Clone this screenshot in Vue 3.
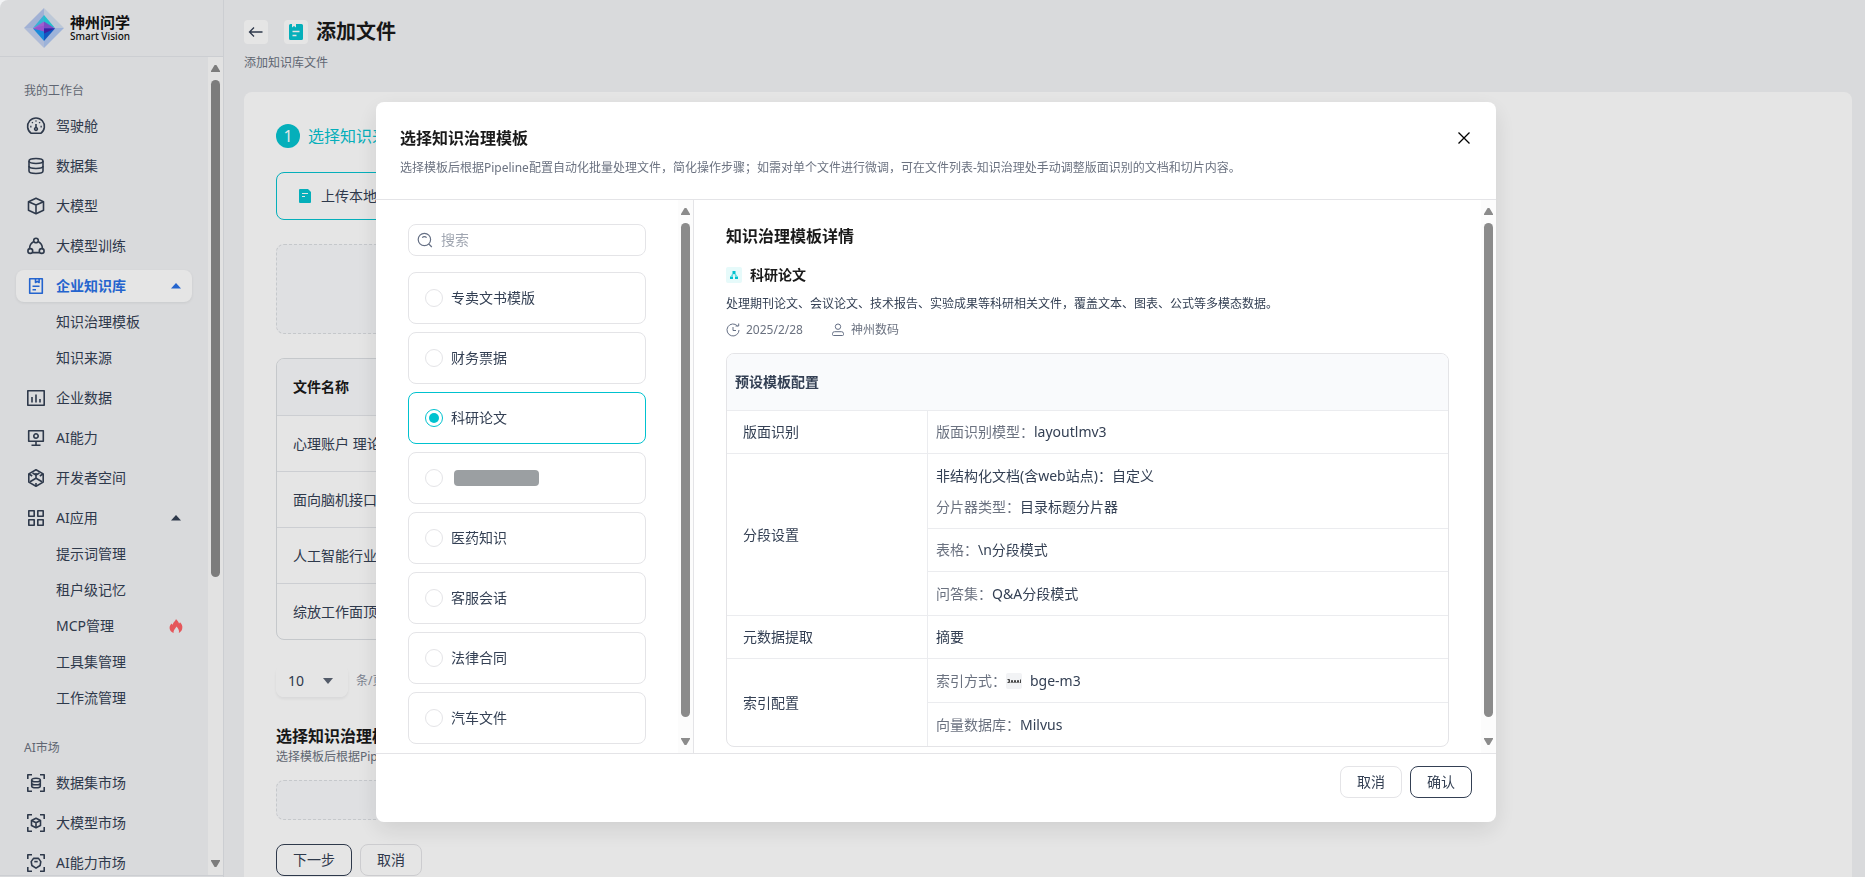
<script setup>
import { ref } from 'vue'

const circle = (cx, cy, r) => `M${cx - r} ${cy}a${r} ${r} 0 1 0 ${2 * r} 0a${r} ${r} 0 1 0 ${-2 * r} 0z`
const brackets = 'M1.800 6V1.800H6M14 1.800h4.200V6M18.200 14v4.200H14M6 18.200H1.800V14'

const icons = {
  gauge: ['M5.200 17.300a8.400 8.400 0 1 1 9.600 0z', 'M10 8v3.500', circle(10, 13, 1.4), 'M10 4.600v1M6 6.200l.8.8M14 6.200l-.8.8M4.200 10.600h1.300M14.500 10.600h1.300'],
  database: ['M3 5c0-1.600 3-2.500 7-2.500s7 .9 7 2.500-3 2.500-7 2.500S3 6.600 3 5z', 'M3 5v10c0 1.600 3 2.500 7 2.500s7-.9 7-2.500V5', 'M3 10c0 1.600 3 2.500 7 2.500s7-.9 7-2.500'],
  cube: ['M10 2.300l7.500 3.400v8.600L10 17.700l-7.500-3.400V5.700z', 'M2.500 5.700L10 9l7.500-3.300M10 9v8.500'],
  train: [circle(10, 4.5, 2.3), circle(4.3, 15, 2.4), circle(15.7, 15, 2.4), 'M7.800 5.500C5 7 3.600 9.600 3.600 12.600M12.200 5.500c2.800 1.500 4.200 4.100 4.200 7.100M6.600 16.600h6.800'],
  book: ['M3.700 2.700h12.600v14.600H3.700z', 'M9.500 3v3.500l1.800-1.200 1.800 1.200V3', 'M6.500 10.300h7M6.500 13.800h3.500'],
  chart: ['M1.800 2.800h16.400v14.400H1.800z', 'M6 14.500V9M10 14.500v-8M14 14.500V11'],
  screen: ['M2.700 2.700h14.600v10.600H2.700z', circle(10, 8, 2.2), 'M10 13.500v3.500M5.500 17.300h9'],
  space: ['M10 1.800l7.200 4.100v8.200L10 18.200l-7.200-4.100V5.900z', 'M10 5v5.200l-6 3.500M10 10.200l6 3.500M3 6l3.200 2M17 6l-3.200 2M10 18v-3', 'M6.500 5L10 7l3.500-2'],
  grid: ['M2.800 2.800h5.400v5.400H2.800zM11.800 2.800h5.400v5.400h-5.400zM2.800 11.800h5.400v5.400H2.800zM11.800 11.800h5.400v5.400h-5.400z'],
  marketData: [brackets, 'M5.700 7c0-1 1.700-1.800 4.300-1.800s4.300.8 4.300 1.800-1.700 1.800-4.300 1.800S5.700 8 5.700 7z', 'M5.700 7v6c0 1 1.700 1.800 4.300 1.800s4.300-.8 4.300-1.800V7M5.700 10c0 1 1.700 1.800 4.300 1.800s4.300-.8 4.300-1.800'],
  marketModel: [brackets, 'M10 5.200l4.500 2.300v5L10 14.800l-4.500-2.300v-5z', 'M5.700 7.500L10 9.700l4.300-2.200M10 9.700v5'],
  marketAi: [brackets, 'M7.500 5.400h5l2.300 3.200-.7 3.900L10 15.200l-4.100-2.700-.7-3.900z', 'M8.300 8.600h3.400'],
}

const sections = [
  {
    title: '我的工作台',
    items: [
      { label: '驾驶舱', icon: 'gauge' },
      { label: '数据集', icon: 'database' },
      { label: '大模型', icon: 'cube' },
      { label: '大模型训练', icon: 'train' },
      { label: '企业知识库', icon: 'book', active: true, children: [{ label: '知识治理模板' }, { label: '知识来源' }] },
      { label: '企业数据', icon: 'chart' },
      { label: 'AI能力', icon: 'screen' },
      { label: '开发者空间', icon: 'space' },
      {
        label: 'AI应用',
        icon: 'grid',
        children: [
          { label: '提示词管理' },
          { label: '租户级记忆' },
          { label: 'MCP管理', hot: true },
          { label: '工具集管理' },
          { label: '工作流管理' },
        ],
      },
    ],
  },
  {
    title: 'AI市场',
    items: [
      { label: '数据集市场', icon: 'marketData' },
      { label: '大模型市场', icon: 'marketModel' },
      { label: 'AI能力市场', icon: 'marketAi' },
    ],
  },
]

const files = ['心理账户 理论', '面向脑机接口', '人工智能行业', '综放工作面顶']

const templates = [
  { id: 'monopoly', name: '专卖文书模版' },
  { id: 'finance', name: '财务票据' },
  { id: 'research', name: '科研论文' },
  { id: 'private', name: '' },
  { id: 'medical', name: '医药知识' },
  { id: 'service', name: '客服会话' },
  { id: 'legal', name: '法律合同' },
  { id: 'auto', name: '汽车文件' },
]
const selected = ref('research')
const keyword = ref('')
const pageSize = ref('10')
</script>

<template>
  <div class="app">
    <aside class="sidebar">
      <div class="brand">
        <svg class="brand-mark" viewBox="0 0 40 40" aria-hidden="true">
          <path d="M20 0L0 20h20z" fill="#b4c6ee" />
          <path d="M20 0l20 20H20z" fill="#d3dff0" />
          <path d="M0 20l20 20V20z" fill="#c3d1f0" />
          <path d="M40 20L20 40V20z" fill="#afc8f2" />
          <path d="M20 7l-11 13 11-4z" fill="#3fc6ee" />
          <path d="M20 7l11 13-11-4z" fill="#27d6e4" />
          <path d="M20 13.500L9 20.500l11 4z" fill="#b06be8" />
          <path d="M20 13.500l11 7-11 4z" fill="#8a55dc" />
          <path d="M9 20.500h11V33z" fill="#1e9af2" />
          <path d="M31 20.500H20V33z" fill="#1463d8" />
          <path d="M9 20.500l11-3v6z" fill="#a95fe4" />
          <path d="M20 20.500h11l-11 5z" fill="#4323b4" />
        </svg>
        <div class="brand-text">
          <span class="brand-cn">神州问学</span>
          <span class="brand-en">Smart Vision</span>
        </div>
      </div>
      <div class="side-body">
        <nav class="nav">
          <section v-for="section in sections" :key="section.title" class="nav-section">
            <h2 class="nav-title">{{ section.title }}</h2>
            <ul class="nav-list">
              <li v-for="item in section.items" :key="item.label">
                <a href="#" class="nav-item" :class="{ active: item.active }">
                  <svg class="nav-icon" viewBox="0 0 20 20" aria-hidden="true">
                    <path v-for="(d, i) in icons[item.icon]" :key="i" :d="d" />
                  </svg>
                  <span class="nav-label">{{ item.label }}</span>
                  <svg v-if="item.children" class="caret" viewBox="0 0 10 6" aria-hidden="true"><path d="M5 0l5 5.500H0z" /></svg>
                </a>
                <ul v-if="item.children" class="sub-list">
                  <li v-for="child in item.children" :key="child.label">
                    <a href="#" class="sub-item">
                      <span class="nav-label">{{ child.label }}</span>
                      <svg v-if="child.hot" class="fire" viewBox="0 0 14 14" aria-hidden="true">
                        <path d="M7 0c.8 1.500 2.800 2.500 3 4.500.5-.2.8-.6 1-1.200C12.500 5 14 7 13.200 9.800 12.800 11.800 11.500 13.200 9.800 14c.8-2-.3-4.500-2.500-6.500C7 9.300 4.200 10.800 4.600 14 2.500 13.300.8 11.600.6 9.200.4 7.200 1.600 6 2.400 4.600c.4.6.9 1 1.400 1.200C3.800 3.200 6.500 2.400 7 0z" />
                      </svg>
                    </a>
                  </li>
                </ul>
              </li>
            </ul>
          </section>
        </nav>
        <div class="rail rail-side" aria-hidden="true"><i class="up"></i><i class="thumb"></i><i class="down"></i></div>
      </div>
    </aside>

    <main class="main">
      <header class="page-head">
        <div class="page-title">
          <button type="button" class="tile" aria-label="返回">
            <svg viewBox="0 0 24 24" aria-hidden="true"><path d="M18.500 12H6M10 7.500L5.500 12l4.500 4.500" class="arrow" /></svg>
          </button>
          <span class="tile tile-doc">
            <svg viewBox="0 0 24 24" aria-hidden="true">
              <path d="M6.500 4H8v3.500l2-1.500 2 1.500V4h5.500A1.500 1.500 0 0 1 19 5.500v13a1.500 1.500 0 0 1-1.500 1.500h-11A1.500 1.500 0 0 1 5 18.500v-13A1.500 1.500 0 0 1 6.500 4z" fill="#06c3d0" />
              <path d="M8.500 11.500h7M8.500 15.500h4" stroke="#fff" stroke-width="1.300" />
            </svg>
          </span>
          <h1>添加文件</h1>
        </div>
        <p>添加知识库文件</p>
      </header>

      <div class="card">
        <div class="step"><span class="step-no">1</span><span>选择知识来源</span></div>
        <button type="button" class="source">
          <svg viewBox="0 0 12 14" aria-hidden="true">
            <path d="M1 0h8l3 3v10a1 1 0 0 1-1 1H1a1 1 0 0 1-1-1V1a1 1 0 0 1 1-1z" fill="#06c3d0" />
            <path d="M3 4.500h6M3 7.500h3" stroke="#fff" />
          </svg>
          上传本地文件
        </button>
        <div class="drop drop-large"></div>
        <table class="files">
          <thead><tr><th>文件名称</th></tr></thead>
          <tbody><tr v-for="file in files" :key="file"><td>{{ file }}</td></tr></tbody>
        </table>
        <div class="pager">
          <div class="select-box">
            <select v-model="pageSize" aria-label="每页条数"><option>10</option><option>20</option></select>
            <svg viewBox="0 0 10 6" aria-hidden="true"><path d="M0 0h10L5 6z" /></svg>
          </div>
          <span>条/页</span>
        </div>
        <h2 class="block-title">选择知识治理模板</h2>
        <p class="block-note">选择模板后根据Pipeline配置自动化批量处理文件</p>
        <div class="drop drop-small"></div>
        <div class="actions">
          <button type="button" class="btn primary">下一步</button>
          <button type="button" class="btn">取消</button>
        </div>
      </div>
    </main>

    <div class="overlay">
      <section class="modal" role="dialog" aria-modal="true" aria-labelledby="modal-title">
        <header class="modal-head">
          <div>
            <h2 id="modal-title">选择知识治理模板</h2>
            <p>选择模板后根据Pipeline配置自动化批量处理文件，简化操作步骤；如需对单个文件进行微调，可在文件列表-知识治理处手动调整版面识别的文档和切片内容。</p>
          </div>
          <button type="button" class="close" aria-label="关闭">
            <svg viewBox="0 0 16 16" aria-hidden="true"><path d="M2.500 2.500l11 11M13.500 2.500l-11 11" /></svg>
          </button>
        </header>

        <div class="modal-body">
          <div class="picker">
            <div class="picker-list">
              <div class="search">
                <svg viewBox="0 0 16 16" aria-hidden="true"><path d="M1.200 7.500a6.200 6.200 0 1 0 12.400 0a6.200 6.200 0 1 0-12.400 0zM11.800 12l3 3M5.200 5.600a3 3 0 0 1 4.400 0" /></svg>
                <input v-model="keyword" type="text" placeholder="搜索" aria-label="搜索" />
              </div>
              <label v-for="item in templates" :key="item.id" class="option" :class="{ chosen: selected === item.id }">
                <input v-model="selected" type="radio" name="template" :value="item.id" :aria-label="item.name || '模板'" />
                <span v-if="item.name">{{ item.name }}</span>
                <span v-else class="masked"></span>
              </label>
            </div>
            <div class="rail rail-pane" aria-hidden="true"><i class="up"></i><i class="thumb"></i><i class="down"></i></div>
          </div>

          <div class="detail">
            <div class="detail-main">
              <h3>知识治理模板详情</h3>
              <div class="detail-name">
                <svg viewBox="0 0 16 16" aria-hidden="true">
                  <rect width="16" height="16" rx="2" fill="#e6fafa" />
                  <path d="M6.500 4h3v3h-3zM4 9.500h3V12H4zM9 9.500h3V12H9z" fill="#00c2cf" />
                  <path d="M7 7L5.500 9.500M9 7l1.500 2.500" stroke="#5bdbe2" stroke-width="1.500" />
                </svg>
                <h4>科研论文</h4>
              </div>
              <p class="detail-desc">处理期刊论文、会议论文、技术报告、实验成果等科研相关文件，覆盖文本、图表、公式等多模态数据。</p>
              <div class="meta">
                <span>
                  <svg viewBox="0 0 14 14" aria-hidden="true"><path d="M11.500 3A6 6 0 1 0 13 7M9.500 3h3.200V.5M7 4v3.500h3" /></svg>
                  2025/2/28
                </span>
                <span>
                  <svg viewBox="0 0 14 14" aria-hidden="true"><path d="M4.300 3.700a2.700 2.700 0 1 0 5.400 0a2.700 2.700 0 1 0-5.400 0zM3.500 8.700h7a2 2 0 0 1 2 2v.8a1 1 0 0 1-1 1h-9a1 1 0 0 1-1-1v-.8a2 2 0 0 1 2-2z" /></svg>
                  神州数码
                </span>
              </div>
              <table class="config">
                <thead><tr><th colspan="2">预设模板配置</th></tr></thead>
                <tbody>
                  <tr>
                    <th scope="row">版面识别</th>
                    <td><span class="key">版面识别模型：</span>layoutlmv3</td>
                  </tr>
                  <tr>
                    <th scope="row" rowspan="3">分段设置</th>
                    <td class="double">
                      <div>非结构化文档(含web站点)：自定义</div>
                      <div><span class="key">分片器类型：</span>目录标题分片器</div>
                    </td>
                  </tr>
                  <tr><td><span class="key">表格：</span>\n分段模式</td></tr>
                  <tr class="tall"><td><span class="key">问答集：</span>Q&amp;A分段模式</td></tr>
                  <tr>
                    <th scope="row">元数据提取</th>
                    <td>摘要</td>
                  </tr>
                  <tr class="tall">
                    <th scope="row" rowspan="2">索引配置</th>
                    <td>
                      <div class="inline">
                        <span class="key">索引方式：</span>
                        <svg viewBox="0 0 16 16" aria-hidden="true">
                          <rect width="16" height="16" rx="2" fill="#f2f3f5" />
                          <path d="M1.500 6.500h2v3h-2M2 8h1.500M5 10l1-3 1 3M8 10l1-3 1 3M11 10l1-3 1 3M14.500 6.500V10" fill="none" stroke="#444" />
                        </svg>
                        <span class="model">bge-m3</span>
                      </div>
                    </td>
                  </tr>
                  <tr class="tall"><td><span class="key">向量数据库：</span>Milvus</td></tr>
                </tbody>
              </table>
            </div>
            <div class="rail rail-pane" aria-hidden="true"><i class="up"></i><i class="thumb"></i><i class="down"></i></div>
          </div>
        </div>

        <footer class="modal-foot">
          <button type="button" class="btn">取消</button>
          <button type="button" class="btn primary">确认</button>
        </footer>
      </section>
    </div>
  </div>
</template>

<style>
body {
  margin: 0;
  background: #fff;
}
</style>

<style scoped>
.app {
  display: flex;
  height: 100vh;
  overflow: hidden;
  background: #f2f3f5;
  color: #344054;
  font-family: "Noto Sans", "Noto Sans CJK SC", sans-serif;
  font-size: 14px;
  line-height: 20px;
}
.app *,
.app *::before {
  box-sizing: border-box;
}
h1, h2, h3, h4, p, ul {
  margin: 0;
  padding: 0;
}
ul {
  list-style: none;
}
button, input, select {
  font: inherit;
  color: inherit;
}
button {
  cursor: pointer;
}
svg {
  display: block;
  flex: none;
}

/* Sidebar */
.sidebar {
  display: flex;
  flex-direction: column;
  flex: none;
  width: 224px;
  border-right: 1px solid #e4e6ea;
}
.brand {
  display: flex;
  flex: none;
  align-items: center;
  gap: 6px;
  height: 57px;
  padding-left: 24px;
  border-bottom: 1px solid #e4e6ea;
}
.brand-mark {
  width: 40px;
  height: 40px;
}
.brand-text {
  display: flex;
  flex-direction: column;
  color: #111;
}
.brand-cn {
  font-size: 15px;
  font-weight: 700;
  line-height: 16px;
}
.brand-en {
  font-size: 10px;
  font-weight: 500;
  line-height: 12px;
}
.side-body {
  display: flex;
  flex: 1;
  min-height: 0;
  margin-bottom: 1px;
  border-bottom: 1px solid #e4e6ea;
}
.nav {
  flex: 1;
  min-width: 0;
  padding: 0 16px;
  overflow: hidden;
}
.nav-section {
  padding-top: 24px;
}
.nav-title {
  margin-bottom: 9px;
  padding-left: 8px;
  color: #6b7280;
  font-size: 12px;
  font-weight: 400;
  line-height: 20px;
}
.nav-list {
  display: flex;
  flex-direction: column;
  gap: 8px;
}
.nav-item,
.sub-item {
  display: flex;
  align-items: center;
  gap: 10px;
  height: 32px;
  padding: 0 11px 0 10px;
  border-radius: 8px;
  color: #344054;
  text-decoration: none;
}
.nav-item.active {
  background: #fff;
  box-shadow: 0 1px 3px rgba(16, 24, 40, 0.08);
  color: #2970e6;
  font-weight: 700;
}
.nav-icon {
  width: 20px;
  height: 20px;
  fill: none;
  stroke: currentColor;
  stroke-width: 1.600;
  stroke-linejoin: round;
}
.nav-label {
  flex: 1;
}
.caret {
  width: 10px;
  height: 6px;
  fill: currentColor;
}
.sub-list {
  display: flex;
  flex-direction: column;
  gap: 4px;
  margin-top: 4px;
}
.sub-item {
  padding-left: 40px;
}
.fire {
  width: 14px;
  height: 14px;
  margin-right: -2px;
  fill: #ff6166;
}

/* Scroll rails */
.rail {
  display: flex;
  flex-direction: column;
  flex: none;
  align-items: center;
  width: 15px;
  padding: 8px 0;
  background: #fcfcfc;
}
.rail .thumb {
  width: 9px;
  margin-top: 8px;
  border-radius: 5px;
  background: #8b8b8b;
}
.rail .up,
.rail .down {
  width: 9px;
  height: 7px;
  background: #8b8b8b;
}
.rail .up {
  clip-path: polygon(40% 0, 60% 0, 100% 85%, 100% 100%, 0 100%, 0 85%);
}
.rail .down {
  margin-top: auto;
  clip-path: polygon(0 0, 100% 0, 100% 15%, 60% 100%, 40% 100%, 0 15%);
}
.rail-side .thumb {
  height: 62%;
}
.rail-pane .thumb {
  height: 92%;
}

/* Page */
.main {
  display: flex;
  flex: 1;
  flex-direction: column;
  min-width: 0;
  padding: 20px 13px 0 20px;
}
.page-title {
  display: flex;
  align-items: center;
  height: 24px;
}
.page-title h1 {
  margin-left: 8px;
  color: #1a1a1a;
  font-size: 20px;
  line-height: 24px;
}
.tile {
  width: 24px;
  height: 24px;
  padding: 0;
  border: 0;
  border-radius: 4px;
  background: #fff;
}
.tile-doc {
  margin-left: 16px;
}
.tile svg {
  width: 24px;
  height: 24px;
}
.arrow {
  fill: none;
  stroke: #344054;
  stroke-width: 1.300;
}
.page-head p {
  margin: 9px 0 19px;
  color: #6b7280;
  font-size: 12px;
  line-height: 20px;
}
.card {
  flex: 1;
  padding: 32px;
  border-radius: 8px 8px 0 0;
  background: #fff;
}
.step {
  display: flex;
  align-items: center;
  gap: 8px;
  color: #06c3d0;
  font-size: 16px;
  line-height: 24px;
}
.step-no {
  width: 24px;
  height: 24px;
  border-radius: 50%;
  background: #06c3d0;
  color: #fff;
  text-align: center;
}
.source {
  display: flex;
  align-items: center;
  gap: 10px;
  width: 240px;
  height: 48px;
  margin: 24px 0;
  padding: 0 22px;
  border: 1px solid #06c3d0;
  border-radius: 8px;
  background: #fff;
}
.source svg {
  width: 12px;
  height: 14px;
}
.drop {
  max-width: 1168px;
  border: 1px dashed #dcdfe3;
  border-radius: 8px;
  background: #f9fafc;
}
.drop-large {
  height: 90px;
}
.drop-small {
  height: 40px;
}
.files {
  width: 100%;
  max-width: 1168px;
  margin: 24px 0 25px;
  border: 1px solid #dcdfe3;
  border-radius: 8px;
  border-spacing: 0;
  overflow: hidden;
}
.files th,
.files td {
  height: 56px;
  padding: 0 16px;
  border-top: 1px solid #e4e6ea;
  text-align: left;
}
.files th {
  border-top: 0;
  background: #f9fafc;
  color: #1a1a1a;
}
.pager {
  display: flex;
  align-items: center;
  gap: 8px;
  color: #8a919f;
  font-size: 12px;
}
.select-box {
  display: grid;
  align-items: center;
  width: 72px;
  border-radius: 8px;
  box-shadow: 0 2px 3px rgba(16, 24, 40, 0.06);
}
.select-box select {
  grid-area: 1 / 1;
  height: 32px;
  padding: 0 12px;
  border: 0;
  border-radius: 8px;
  background: #fff;
  color: #344054;
  font-size: 14px;
  appearance: none;
}
.select-box svg {
  grid-area: 1 / 1;
  justify-self: end;
  width: 10px;
  height: 6px;
  margin-right: 15px;
  fill: #5d6675;
  pointer-events: none;
}
.block-title {
  margin-top: 27px;
  color: #1a1a1a;
  font-size: 16px;
  line-height: 24px;
}
.block-note {
  margin-bottom: 14px;
  color: #6b7280;
  font-size: 12px;
  line-height: 18px;
}
.actions {
  display: flex;
  gap: 8px;
  margin-top: 24px;
}
.btn {
  height: 32px;
  padding: 0 16px;
  border: 1px solid #e4e4e7;
  border-radius: 8px;
  background: #fff;
}
.btn.primary {
  border-color: #344054;
}

/* Dialog */
.overlay {
  position: fixed;
  inset: 0;
  display: flex;
  align-items: flex-start;
  justify-content: center;
  padding: 102px 0 0 7px;
  border-radius: 8px 0 0 0;
  background: rgba(0, 0, 0, 0.1);
}
.modal {
  display: flex;
  flex-direction: column;
  width: 1120px;
  max-width: 96%;
  border-radius: 8px;
  background: #fff;
  box-shadow: 0 8px 24px rgba(0, 0, 0, 0.1);
  overflow: hidden;
}
.modal-head {
  display: flex;
  justify-content: space-between;
  padding: 24px 24px 21px;
  border-bottom: 1px solid #e4e4e7;
}
.modal-head h2,
.detail h3 {
  color: #1a1a1a;
  font-size: 16px;
  line-height: 24px;
}
.modal-head p {
  margin-top: 8px;
  color: #6b7280;
  font-size: 12px;
  line-height: 20px;
}
.close {
  align-self: flex-start;
  width: 16px;
  height: 24px;
  padding: 0;
  border: 0;
  background: none;
}
.close svg {
  width: 16px;
  height: 16px;
  fill: none;
  stroke: #000;
  stroke-width: 1.300;
}
.modal-body {
  display: flex;
}
.picker {
  display: flex;
  flex: none;
  width: 318px;
  border-right: 1px solid #e4e4e7;
}
.picker-list {
  display: flex;
  flex: 1;
  flex-direction: column;
  gap: 8px;
  min-width: 0;
  padding: 24px 32px 9px;
}
.search {
  display: flex;
  align-items: center;
  gap: 8px;
  height: 32px;
  margin-bottom: 8px;
  padding: 0 8px;
  border: 1px solid #e4e4e7;
  border-radius: 8px;
}
.search svg {
  width: 16px;
  height: 16px;
  fill: none;
  stroke: #667085;
  stroke-width: 1.200;
}
.search input {
  flex: 1;
  min-width: 0;
  padding: 0;
  border: 0;
  outline: 0;
  background: none;
}
.search input::placeholder {
  color: #a0a6b1;
}
.option {
  display: flex;
  align-items: center;
  gap: 8px;
  height: 52px;
  padding: 0 16px;
  border: 1px solid #e4e4e7;
  border-radius: 8px;
}
.option.chosen {
  border-color: #00c2cf;
}
.option input {
  display: grid;
  place-items: center;
  width: 18px;
  height: 18px;
  margin: 0;
  border: 1px solid #e4e4e7;
  border-radius: 50%;
  background: #fff;
  appearance: none;
}
.option input:checked {
  border-color: #00c2cf;
}
.option input:checked::before {
  width: 10px;
  height: 10px;
  border-radius: 50%;
  background: #00c2cf;
  content: "";
}
.masked {
  width: 85px;
  height: 16px;
  margin-left: 3px;
  border-radius: 4px;
  background: #9b9fa2;
}
.detail {
  display: flex;
  flex: 1;
  min-width: 0;
}
.detail-main {
  flex: 1;
  min-width: 0;
  padding: 24px 32px 0;
}
.detail-name {
  display: flex;
  align-items: center;
  gap: 8px;
  margin-top: 17px;
}
.detail-name svg {
  width: 16px;
  height: 16px;
}
.detail-name h4 {
  color: #1a1a1a;
  font-size: 14px;
  line-height: 20px;
}
.detail-desc {
  margin-top: 9px;
  font-size: 12px;
  line-height: 20px;
}
.meta {
  display: flex;
  gap: 28px;
  margin-top: 6px;
  color: #6b7280;
  font-size: 12px;
  line-height: 20px;
}
.meta span {
  display: flex;
  align-items: center;
  gap: 6px;
}
.meta svg {
  width: 14px;
  height: 14px;
  fill: none;
  stroke: #667085;
}
.config {
  width: 100%;
  margin-top: 13px;
  border: 1px solid #e4e4e7;
  border-radius: 8px;
  border-spacing: 0;
  overflow: hidden;
}
.config th,
.config td {
  height: 43px;
  padding: 0 8px;
  border-top: 1px solid #ebecef;
  text-align: left;
}
.config tbody th {
  width: 201px;
  padding-left: 16px;
  border-right: 1px solid #ebecef;
  font-weight: 400;
}
.config thead th {
  height: 56px;
  border-top: 0;
  background: #f9fafc;
}
.config .tall td {
  height: 44px;
}
.config .double {
  height: 75px;
}
.double div + div {
  margin-top: 11px;
}
.key {
  color: #6b7280;
}
.inline {
  display: flex;
  align-items: center;
}
.inline svg {
  width: 16px;
  height: 16px;
}
.model {
  margin-left: 8px;
}
.modal-foot {
  display: flex;
  justify-content: flex-end;
  gap: 8px;
  padding: 12px 24px 24px;
  border-top: 1px solid #e4e4e7;
}
</style>
